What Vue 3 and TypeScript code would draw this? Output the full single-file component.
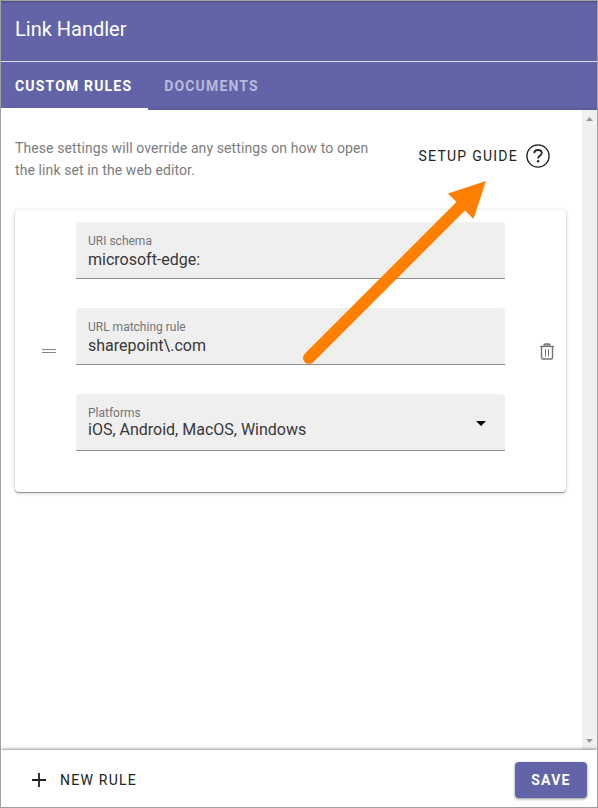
<script setup lang="ts">
import { ref } from 'vue'

interface Field {
  label: string
  value: string
  select?: boolean
}

const tabs: string[] = ['Custom rules', 'Documents']
const activeTab = ref(0)

const fields: Field[] = [
  { label: 'URI schema', value: 'microsoft-edge:' },
  { label: 'URL matching rule', value: 'sharepoint\\.com' },
  { label: 'Platforms', value: 'iOS, Android, MacOS, Windows', select: true },
]
</script>

<template>
  <div class="window">
    <header class="header">
      <h1 class="title">Link Handler</h1>
      <nav class="tabs">
        <button
          v-for="(tab, i) in tabs"
          :key="tab"
          class="tab"
          :class="{ active: i === activeTab }"
          @click="activeTab = i"
        >{{ tab }}</button>
      </nav>
    </header>

    <div class="body">
      <main class="content">
        <section class="intro">
          <p class="intro-text">These settings will override any settings on how to open the link set in the web editor.</p>
          <button class="guide">
            <span>Setup guide</span>
            <svg width="24" height="24" viewBox="0 0 24 24" fill="none" stroke="#222">
              <circle cx="12" cy="12" r="11.1" stroke-width="1.3" />
              <path d="M8.300 9.200C8.400 7.200 9.900 6 12 6s3.700 1.200 3.700 3.100c0 2.700-3.600 2.700-3.600 5.400" stroke-width="1.800" />
              <circle cx="12.100" cy="17.200" r="1.200" fill="#222" stroke="none" />
            </svg>
          </button>
        </section>

        <section class="card">
          <div class="handle">
            <svg width="14" height="5" viewBox="0 0 14 5" shape-rendering="crispEdges" fill="#858585">
              <rect width="14" height="1" />
              <rect y="3" width="14" height="1" />
            </svg>
          </div>
          <div class="fields">
            <div v-for="field in fields" :key="field.label" class="field" :class="{ select: field.select }">
              <div class="field-text">
                <span class="label">{{ field.label }}</span>
                <span class="value">{{ field.value }}</span>
              </div>
              <svg v-if="field.select" class="caret" width="10" height="5" viewBox="0 0 10 5">
                <path d="M0 0h10L5 5z" />
              </svg>
            </div>
          </div>
          <button class="delete" aria-label="Delete">
            <svg width="14" height="17" viewBox="0 0 14 17" fill="none" stroke="#757575">
              <path d="M0 3.500h14" stroke-width="1.300" />
              <path d="M4 3V2Q4 1 5 1h4q1 0 1 1v1" stroke-width="1.300" fill="#aaa" />
              <path d="M1.500 4v10.500q0 1.500 1.500 1.500h8q1.500 0 1.500-1.500V4" stroke-width="1.400" />
              <path d="M5.500 6v7.500M8.500 6v7.500" />
            </svg>
          </button>
        </section>
      </main>

      <div class="scrollbar">
        <svg width="7" height="4" viewBox="0 0 7 4" fill="#999"><path d="M0 4L3.500 0L7 4z" /></svg>
        <svg width="7" height="4" viewBox="0 0 7 4" fill="#999"><path d="M0 0h7L3.500 4z" /></svg>
      </div>
    </div>

    <footer class="footer">
      <button class="new-rule">
        <svg width="14" height="14" viewBox="0 0 14 14" stroke="#222" stroke-width="1.800"><path d="M0 7h14M7 0v14" /></svg>
        <span>New rule</span>
      </button>
      <button class="save">Save</button>
    </footer>

    <svg class="arrow" width="190" height="190" viewBox="300 178 190 190">
      <path d="M309 358L462 205" stroke="#ff8000" stroke-width="12" stroke-linecap="round" />
      <path d="M486 181L448 193.500L473.500 219z" fill="#ff8000" />
    </svg>
  </div>
</template>

<style>
body {
  margin: 0;
}
</style>

<style scoped>
.window {
  position: relative;
  box-sizing: border-box;
  width: 598px;
  height: 808px;
  display: flex;
  flex-direction: column;
  overflow: hidden;
  border: 1px solid #a0a0a0;
  background: #fff;
  font-family: Roboto, "Liberation Sans", sans-serif;
}

button {
  margin: 0;
  padding: 0;
  border: 0;
  background: none;
  font: 500 14px/20px Roboto, "Liberation Sans", sans-serif;
  letter-spacing: 1.25px;
  text-transform: uppercase;
  color: #222;
}

svg {
  display: block;
  flex: none;
}

.header {
  flex: none;
  background: #6264a7;
  box-shadow: inset 0 3px 3px -2px rgba(0, 0, 0, 0.25), inset 0 -3px 3px -2px rgba(0, 0, 0, 0.12);
}

.title {
  box-sizing: border-box;
  height: 61px;
  margin: 0;
  padding: 12px 14px 0;
  border-bottom: 1px solid #dcdde6;
  font-size: 20px;
  font-weight: 400;
  line-height: 32px;
  letter-spacing: 0;
  color: #fff;
}

.tabs {
  display: flex;
  height: 48px;
}

.tab {
  box-sizing: border-box;
  padding: 0 16px 0 14px;
  border-bottom: 2px solid transparent;
  border-top: 2px solid transparent;
  font-weight: 700;
  letter-spacing: 1.17px;
  color: #b9badb;
}

.tab.active {
  border-bottom-color: #fff;
  color: #fff;
}

.tab + .tab {
  padding-left: 16px;
}

.body {
  flex: 1;
  min-height: 0;
  display: flex;
}

.content {
  flex: 1;
  padding: 27px 16px 0 14px;
}

.intro {
  display: flex;
  justify-content: space-between;
  height: 73px;
}

.intro-text {
  width: 362px;
  margin: 0;
  font-size: 14px;
  line-height: 22px;
  letter-spacing: 0.1px;
  color: #7c7c7c;
}

.guide {
  display: flex;
  align-items: center;
  gap: 8px;
  height: 24px;
  margin: 7px 16px 0 0;
}

.guide,
.new-rule {
  font-weight: 400;
}

.card {
  box-sizing: border-box;
  display: grid;
  grid-template-columns: 61px 429px 1fr;
  align-items: center;
  height: 282px;
  border-radius: 4px;
  box-shadow: 0 1px 1px rgba(0, 0, 0, 0.35), 0 1px 4px rgba(0, 0, 0, 0.2);
}

.handle {
  padding-left: 27px;
}

.fields {
  display: grid;
  gap: 29px;
  align-self: start;
  padding-top: 12px;
}

.field {
  box-sizing: border-box;
  display: flex;
  align-items: flex-start;
  justify-content: space-between;
  height: 57px;
  padding: 11px 19px 0 12px;
  border-radius: 4px 4px 0 0;
  border-bottom: 1px solid #8e8e8e;
  background: #efefef;
}

.field-text {
  display: flex;
  flex-direction: column;
}

.label {
  font-size: 12px;
  line-height: 16px;
  color: #757575;
}

.value {
  margin-top: 1px;
  font-size: 16px;
  line-height: 20px;
  letter-spacing: 0;
  color: #383838;
}

.select .value {
  margin-top: -1px;
}

.caret {
  margin-top: 16px;
}

.delete {
  justify-self: end;
  margin-right: 12px;
}

.scrollbar {
  box-sizing: border-box;
  display: flex;
  flex-direction: column;
  justify-content: space-between;
  align-items: center;
  width: 15px;
  padding: 7px 0;
  background: #f0f0f0;
}

.footer {
  position: relative;
  flex: none;
  box-sizing: border-box;
  display: flex;
  align-items: center;
  justify-content: space-between;
  height: 57px;
  padding: 2px 10px 0 31px;
  background: #fff;
  box-shadow: 0 0 4px rgba(0, 0, 0, 0.65);
}

.new-rule {
  display: flex;
  align-items: center;
  gap: 14px;
}

.save {
  width: 72px;
  height: 36px;
  border-radius: 4px;
  background: #6264a7;
  box-shadow: 0 1px 3px rgba(0, 0, 0, 0.45);
  font-weight: 700;
  color: #fff;
}

.arrow {
  position: absolute;
  left: 299px;
  top: 177px;
  pointer-events: none;
}
</style>
